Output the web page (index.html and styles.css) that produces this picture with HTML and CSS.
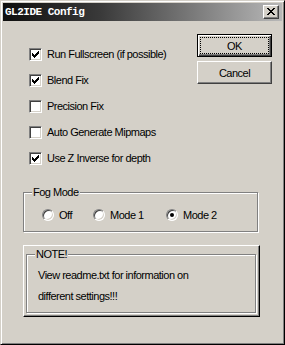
FILE: index.html
```
<!DOCTYPE html>
<html>
<head>
<meta charset="utf-8">
<link rel="stylesheet" href="styles.css">
</head>
<body>
<div class="window">
  <div class="titlebar">
    <span class="title">GL2IDE Config</span>
    <span class="close"><svg width="8" height="7" viewBox="0 0 8 7"><path fill="#000" d="M0 0h2v1H0zM6 0h2v1H6zM1 1h2v1H1zM5 1h2v1H5zM2 2h4v1H2zM3 3h2v1H3zM2 4h4v1H2zM1 5h2v1H1zM5 5h2v1H5zM0 6h2v1H0zM6 6h2v1H6z"/></svg></span>
  </div>
  <div class="content">
    <div class="top">
      <div class="checks">
        <div class="row"><span class="cb"><svg class="tick" width="11" height="11" viewBox="0 0 11 11"><path fill="#000" d="M2 4h1v3H2zM3 5h1v3H3zM4 6h1v3H4zM5 5h1v3H5zM6 4h1v3H6zM7 3h1v3H7zM8 2h1v3H8z"/></svg></span><span class="label">Run Fullscreen (if possible)</span></div>
        <div class="row"><span class="cb"><svg class="tick" width="11" height="11" viewBox="0 0 11 11"><path fill="#000" d="M2 4h1v3H2zM3 5h1v3H3zM4 6h1v3H4zM5 5h1v3H5zM6 4h1v3H6zM7 3h1v3H7zM8 2h1v3H8z"/></svg></span><span class="label">Blend Fix</span></div>
        <div class="row"><span class="cb"></span><span class="label">Precision Fix</span></div>
        <div class="row"><span class="cb"></span><span class="label">Auto Generate Mipmaps</span></div>
        <div class="row"><span class="cb"><svg class="tick" width="11" height="11" viewBox="0 0 11 11"><path fill="#000" d="M2 4h1v3H2zM3 5h1v3H3zM4 6h1v3H4zM5 5h1v3H5zM6 4h1v3H6zM7 3h1v3H7zM8 2h1v3H8z"/></svg></span><span class="label">Use Z Inverse for depth</span></div>
      </div>
      <div class="buttons">
        <div class="btn btn-default"><span>OK</span></div>
        <div class="btn"><span>Cancel</span></div>
      </div>
    </div>
    <div class="group fog">
      <span class="legend">Fog Mode</span>
      <div class="radios">
        <div class="radio-item"><span class="radio"></span><span>Off</span></div>
        <div class="radio-item"><span class="radio"></span><span>Mode 1</span></div>
        <div class="radio-item"><span class="radio on"></span><span>Mode 2</span></div>
      </div>
    </div>
    <div class="frame">
      <div class="group note">
        <span class="legend">NOTE!</span>
        <p class="line">View readme.txt for information on</p>
        <p class="line">different settings!!!</p>
      </div>
    </div>
  </div>
</div>
</body>
</html>
```
FILE: styles.css
```
html, body {
  margin: 0;
  padding: 0;
  background: #d4d0c8;
}
body {
  font-family: "Liberation Sans", Arial, sans-serif;
  font-size: 11px;
  letter-spacing: -0.5px;
  color: #000;
}
.window {
  width: 285px;
  height: 345px;
  box-sizing: border-box;
  border: 1px solid;
  border-color: #d4d0c8 #000 #000 #d4d0c8;
  box-shadow: inset 1px 1px #fff, inset -1px -1px #808080;
  padding: 2px;
  background: #d4d0c8;
}
.titlebar {
  height: 18px;
  display: flex;
  align-items: center;
  justify-content: space-between;
  padding: 0 3px 0 2px;
  background: linear-gradient(to right, #0e0e0e 0%, #3a3a3a 35%, #b8b8b8 100%);
}
.title {
  color: #fff;
  font-family: "Liberation Mono", "DejaVu Sans Mono", monospace;
  font-weight: bold;
  font-size: 11px;
  letter-spacing: -0.5px;
  line-height: 18px;
}
.close {
  width: 16px;
  height: 14px;
  box-sizing: border-box;
  border: 1px solid;
  border-color: #fff #404040 #404040 #fff;
  box-shadow: inset -1px -1px #808080;
  background: #d4d0c8;
}
.close svg {
  display: block;
  margin: 2px 0 0 3px;
}
.content {
  display: flex;
  flex-direction: column;
}
.top {
  display: flex;
  justify-content: space-between;
}
.checks {
  display: flex;
  flex-direction: column;
  padding: 20px 0 0 26px;
}
.row {
  height: 26px;
  display: flex;
  align-items: center;
  gap: 5px;
}
.cb {
  width: 13px;
  height: 13px;
  box-sizing: border-box;
  border: 1px solid;
  border-color: #808080 #fff #fff #808080;
  box-shadow: inset 1px 1px #404040, inset -1px -1px #d4d0c8;
  background: #fff;
  flex: none;
}
.tick {
  display: block;
}
.buttons {
  display: flex;
  flex-direction: column;
  gap: 4px;
  padding: 13px 10px 0 0;
}
.btn {
  width: 75px;
  height: 23px;
  box-sizing: border-box;
  display: flex;
  align-items: center;
  justify-content: center;
  border: 1px solid;
  border-color: #fff #404040 #404040 #fff;
  box-shadow: inset -1px -1px #808080;
  background: #d4d0c8;
}
.btn-default {
  border-color: #000;
  box-shadow: inset 1px 1px #fff, inset -1px -1px #404040, inset -2px -2px #808080;
  outline: 1px dotted #000;
  outline-offset: -4px;
}
.group {
  position: relative;
  box-sizing: border-box;
  border: 1px solid #808080;
  box-shadow: inset 1px 1px #fff, 1px 1px #fff;
}
.legend {
  position: absolute;
  top: -7px;
  left: 8px;
  padding: 0 1px;
  line-height: 13px;
  background: #d4d0c8;
}
.fog {
  margin: 21px 0 0 20px;
  width: 235px;
  height: 40px;
}
.radios {
  display: grid;
  grid-template-columns: 51px 73px auto;
  padding: 15px 0 0 18px;
}
.radio-item {
  display: flex;
  align-items: center;
  gap: 5px;
  height: 13px;
}
.radio {
  position: relative;
  width: 12px;
  height: 12px;
  box-sizing: border-box;
  border-radius: 50%;
  border: 1px solid;
  border-color: #808080 #fff #fff #808080;
  box-shadow: inset 1px 1px #404040, inset -1px -1px #d4d0c8;
  background: #fff;
  flex: none;
}
.radio.on::after {
  content: "";
  position: absolute;
  left: 3px;
  top: 3px;
  width: 4px;
  height: 4px;
  border-radius: 50%;
  background: #000;
}
.frame {
  margin: 13px 0 0 20px;
  width: 237px;
  box-sizing: border-box;
  border: 1px solid;
  border-color: #fff #000 #000 #fff;
  box-shadow: inset -1px -1px #808080;
  padding: 8px 3px 3px 2px;
}
.note {
  padding: 10px 0 5px 11px;
}
.line {
  margin: 0;
  line-height: 21px;
}
```
